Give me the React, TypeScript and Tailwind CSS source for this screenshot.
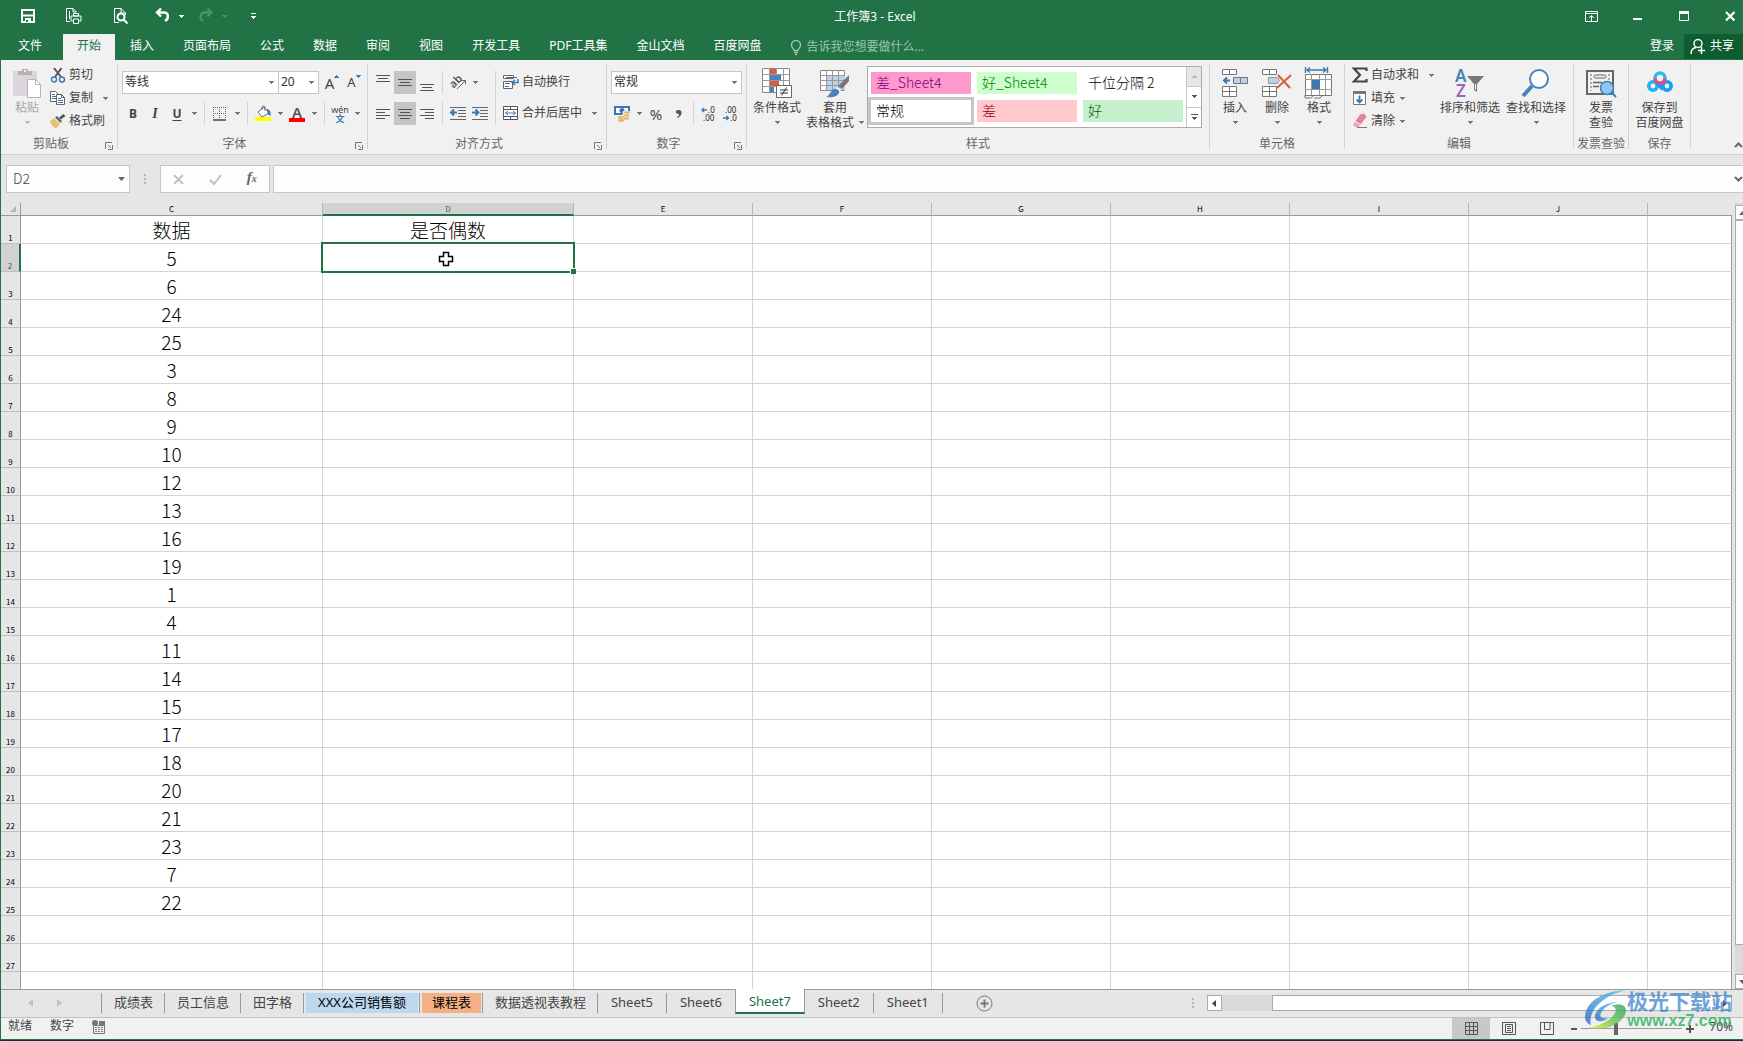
import type { ReactNode } from "react";

/**
 * 电子表格窗口：标题栏、功能区、编辑栏、单元格区域、工作表标签和状态栏
 */

interface ColumnDef {
	name: string;
	width?: number; // 未指定时占满剩余宽度
}

interface SheetTab {
	name: string;
	look?: string;
	active?: boolean;
}

const MENU_TABS = [
	"插入",
	"页面布局",
	"公式",
	"数据",
	"审阅",
	"视图",
	"开发工具",
	"PDF工具集",
	"金山文档",
	"百度网盘",
];

const COLUMNS: ColumnDef[] = [
	{ name: "C", width: 302 },
	{ name: "D", width: 251 },
	{ name: "E", width: 179 },
	{ name: "F", width: 179 },
	{ name: "G", width: 179 },
	{ name: "H", width: 179 },
	{ name: "I", width: 179 },
	{ name: "J", width: 179 },
	{ name: "" },
];

const VALUES = [
	5, 6, 24, 25, 3, 8, 9, 10, 12, 13, 16, 19, 1, 4, 11, 14, 15, 17, 18, 20, 21,
	23, 7, 22,
];

const ROWS = Array.from({ length: 28 }, (_, i) => i + 1);

const SHEETS: SheetTab[] = [
	{ name: "成绩表" },
	{ name: "员工信息" },
	{ name: "田字格" },
	{ name: "XXX公司销售额", look: "bg-[#bdd7ee] px-3" },
	{ name: "课程表", look: "bg-[#f4b084] px-[10px]" },
	{ name: "数据透视表教程" },
	{ name: "Sheet5" },
	{ name: "Sheet6" },
	{ name: "Sheet7", active: true },
	{ name: "Sheet2" },
	{ name: "Sheet1" },
];

const STYLES = [
	{ name: "差_Sheet4", look: "bg-[#ff99cc] text-[#800080]" },
	{ name: "好_Sheet4", look: "bg-[#ccffcc] text-[#008000]" },
	{ name: "千位分隔 2", look: "bg-white text-black" },
	{
		name: "常规",
		look: "bg-white text-black outline-3 outline-[#c6c6c6]",
	},
	{ name: "差", look: "bg-[#ffc7ce] text-[#9c0006]" },
	{ name: "好", look: "bg-[#c6efce] text-[#006100]" },
];

/* ---------- 通用小部件 ---------- */

function Svg({
	w = 16,
	h = 16,
	className = "",
	children,
}: {
	w?: number;
	h?: number;
	className?: string;
	children: ReactNode;
}) {
	return (
		<svg
			width={w}
			height={h}
			viewBox={`0 0 ${w} ${h}`}
			fill="none"
			className={`shrink-0 overflow-visible ${className}`}
			aria-hidden="true"
		>
			{children}
		</svg>
	);
}

function Caret({ className = "text-[#777]" }: { className?: string }) {
	return (
		<Svg w={5} h={3} className={className}>
			<path
				d="M0 0h5v1H0zM1 1h3v1H1zM2 2h1v1H2z"
				fill="currentColor"
				shapeRendering="crispEdges"
			/>
		</Svg>
	);
}

function CaretButton({ label }: { label: string }) {
	return (
		<button
			type="button"
			aria-label={label}
			className="flex h-full w-3 items-center justify-center"
		>
			<Caret />
		</button>
	);
}

function Tool({
	label,
	on = false,
	children,
}: {
	label: string;
	on?: boolean;
	children: ReactNode;
}) {
	return (
		<button
			type="button"
			aria-label={label}
			aria-pressed={on}
			className={`flex h-full w-[22px] items-center justify-center ${on ? "bg-[#c5c5c5]" : ""}`}
		>
			{children}
		</button>
	);
}

function Sep() {
	return <span className="mx-1 h-full w-px bg-[#d2d2d2]" />;
}

function Row({ children }: { children: ReactNode }) {
	return <div className="flex h-[23px] items-center">{children}</div>;
}

function Combo({ label, value }: { label: string; value: string }) {
	return (
		<label className="relative flex h-full w-full items-center border border-[#c6c6c6] bg-white">
			<select
				aria-label={label}
				className="h-full w-full appearance-none bg-transparent pb-0.5 pl-0.5 text-xs leading-5 text-[#333] outline-none"
			>
				<option>{value}</option>
			</select>
			<span className="pointer-events-none absolute right-1">
				<Caret />
			</span>
		</label>
	);
}

function Group({
	title,
	width,
	launcher = false,
	children,
}: {
	title: string;
	width: string;
	launcher?: boolean;
	children: ReactNode;
}) {
	return (
		<section
			aria-label={title}
			className={`flex shrink-0 flex-col border-r border-[#d2d2d2] ${width}`}
		>
			<div className="flex h-[75px]">{children}</div>
			<div className="flex h-[10px] items-center">
				<span className="flex-1 text-center whitespace-nowrap text-[#666]">
					{title}
				</span>
				{launcher && (
					<button
						type="button"
						aria-label={`${title}设置`}
						className="flex w-4 justify-center pt-1"
					>
						<Svg w={8} h={8}>
							<path d="M.5 7V.5H7" stroke="#777" />
							<path d="M3 3l3 3M7.500 3v4.500H3" stroke="#777" />
						</Svg>
					</button>
				)}
			</div>
		</section>
	);
}

function LargeButton({
	icon,
	lines,
	width,
	caret,
	muted = false,
}: {
	icon: ReactNode;
	lines: string[];
	width: string;
	caret?: "below" | "side";
	muted?: boolean;
}) {
	return (
		<button
			type="button"
			className={`flex shrink-0 flex-col items-center pt-1 leading-[15px] whitespace-nowrap ${width} ${muted ? "text-[#a6a6a6]" : "text-[#444]"}`}
		>
			<span className="mb-0.5 flex h-[30px] items-center">{icon}</span>
			{lines.map((line, i) => (
				<span key={line} className="flex items-center gap-[5px]">
					{line}
					{caret === "side" && i === lines.length - 1 && <Caret />}
				</span>
			))}
			{caret === "below" && (
				<span className="flex h-[15px] items-center">
					<Caret className={muted ? "text-[#bbb]" : "text-[#777]"} />
				</span>
			)}
		</button>
	);
}

function SmallButton({
	icon,
	text,
	caret,
}: {
	icon: ReactNode;
	text: string;
	caret?: "near" | "far";
}) {
	return (
		<button
			type="button"
			className="flex h-[23px] items-center gap-[3px] pb-px whitespace-nowrap text-[#444]"
		>
			{icon}
			<span className="pb-px">{text}</span>
			{caret && (
				<span className={caret === "far" ? "ml-[7px]" : "ml-0.5"}>
					<Caret />
				</span>
			)}
		</button>
	);
}

/* ---------- 图标 ---------- */

function Lines({ spans }: { spans: [number, number, number][] }) {
	return (
		<Svg>
			{spans.map(([x, y, w]) => (
				<rect key={y} x={x} y={y} width={w} height={1} fill="#555" />
			))}
		</Svg>
	);
}

function IndentIcon({ right = false }: { right?: boolean }) {
	return (
		<Svg>
			<path
				d="M0 1.500h16M8 4.500h8M8 7.500h8M8 10.500h8M0 13.500h16"
				stroke="#666"
			/>
			{right ? (
				<path d="M0 6.500h6M3.500 3.500l3 3-3 3" stroke="#3e78b3" strokeWidth="2" />
			) : (
				<path d="M7 6.500H1M4 3.500l-3 3 3 3" stroke="#3e78b3" strokeWidth="2" />
			)}
		</Svg>
	);
}

function PasteIcon() {
	return (
		<Svg w={28} h={30}>
			<path d="M0 3h24v25H0z" fill="#dcd6dc" />
			<path d="M5 7V3h4V1h6v2h4v4z" fill="#b5b0b5" />
			<rect x="11" y="2" width="2" height="2" fill="#f1f1f1" />
			<path d="M14.500 11.500h8l5 5v13h-13z" fill="#fff" stroke="#b9b2bb" />
			<path d="M22.500 11.500v5h5" stroke="#b9b2bb" />
		</Svg>
	);
}

function CutIcon() {
	return (
		<Svg>
			<path d="M4 1l7 9M11.500 1L5 10" stroke="#555" strokeWidth="2" />
			<circle cx="4" cy="12.500" r="2.500" stroke="#3e78b3" strokeWidth="1.400" />
			<circle cx="12" cy="12.500" r="2.500" stroke="#3e78b3" strokeWidth="1.400" />
		</Svg>
	);
}

function CopyIcon() {
	return (
		<Svg>
			<path d="M.5 1.500h5l3 3v7h-8z" fill="#fff" stroke="#666" />
			<path d="M2 4.500h3M2 6.500h4M2 8.500h4" stroke="#3e78b3" />
			<path d="M6.500 4.500h5l3 3v7h-8z" fill="#fff" stroke="#666" />
			<path d="M11.500 4.500v3h3" stroke="#666" />
			<path d="M8 8.500h3M8 10.500h5M8 12.500h5" stroke="#3e78b3" />
		</Svg>
	);
}

function BrushIcon() {
	return (
		<Svg>
			<path d="M0 8l4-3 6 6-4 4.500c-3-1-5-4-6-7.500z" fill="#e9bf78" />
			<path d="M5 4.500l2-1.500 5 5-1.500 2z" fill="#666" />
			<path d="M9 4.500L13.500 1l2 2L11 6.500z" fill="#555" />
		</Svg>
	);
}

function BordersIcon() {
	return (
		<Svg w={14} h={14}>
			<path
				d="M0 .5h13M0 6.500h13M.5 0v12M6.500 0v12M12.500 0v12"
				stroke="#666"
				strokeDasharray="1 1"
			/>
			<path d="M0 13h13" stroke="#444" strokeWidth="1.500" />
		</Svg>
	);
}

function FillIcon() {
	return (
		<Svg w={17} h={17}>
			<path d="M3 7l6-5 5 6-7 4z" fill="#fff" stroke="#666" />
			<path d="M7 5V2.500C7 .5 10 .5 10 2.500V6" stroke="#666" />
			<path d="M12 4c3 .5 4 3 3.500 7l-3-2z" fill="#3e78b3" />
			<rect x="0" y="12" width="16" height="4" fill="#ff0" />
		</Svg>
	);
}

function OrientationIcon() {
	return (
		<Svg w={17} h={17}>
			<text
				x="0"
				y="12"
				transform="rotate(-45 5 9)"
				fontSize="11"
				fontFamily="Noto Sans"
				fill="#555"
				fontWeight="600"
			>
				ab
			</text>
			<path d="M7 15l8-8M11.500 6.500h4v4" stroke="#666" />
		</Svg>
	);
}

function WrapIcon() {
	return (
		<Svg>
			<path d="M.5 1.500h10v3H.5zM.5 7.500h9v7H.5z" fill="#fff" stroke="#666" />
			<path d="M3 3.500h11M2 9.500h5M2 12.500h4" stroke="#3e78b3" />
			<path
				d="M15 5v3.500H9.500M12 6l-3 2.500 3 2.500"
				stroke="#3e78b3"
				strokeWidth="1.500"
			/>
		</Svg>
	);
}

function MergeIcon() {
	return (
		<Svg>
			<path d="M.5 1.500h14v13H.5z" fill="#fff" stroke="#555" />
			<path d="M.5 4.500h14M.5 11.500h14M7.500 1v3M7.500 12v3" stroke="#555" />
			<path d="M2.500 8h10M5 6L2.500 8 5 10M10 6l2.500 2L10 10" stroke="#3e78b3" />
		</Svg>
	);
}

function CurrencyIcon() {
	return (
		<Svg w={17} h={17}>
			<path d="M0 1h16v9H0z" fill="#3e78b3" />
			<path d="M2 3h12v5H2z" fill="#fff" />
			<circle cx="8" cy="5.500" r="2.500" fill="#3e78b3" />
			<path d="M9 6h8v8H8z" fill="#f1f1f1" />
			<ellipse cx="13" cy="7.500" rx="3" ry="1.200" fill="#e6b871" />
			<ellipse cx="12.500" cy="10.500" rx="3" ry="1.200" fill="#e6b871" />
			<ellipse cx="12.500" cy="13.500" rx="3" ry="1.200" fill="#e6b871" />
			<ellipse cx="7" cy="12.500" rx="3.200" ry="1.400" fill="#e6b871" />
			<ellipse cx="7" cy="15.500" rx="3.200" ry="1.400" fill="#e6b871" />
		</Svg>
	);
}

function DecimalIcon({ more = false }: { more?: boolean }) {
	return (
		<Svg w={16} h={16}>
			<text x={more ? 7 : 2} y="7" fontSize="8" fontFamily="Noto Sans" fill="#222">
				{more ? ".0" : ".00"}
			</text>
			<text x={more ? 2 : 7} y="15" fontSize="8" fontFamily="Noto Sans" fill="#222">
				{more ? ".00" : ".0"}
			</text>
			{more ? (
				<path d="M6 4H1M3 2L1 4l2 2" stroke="#3e78b3" strokeWidth="1.400" />
			) : (
				<path d="M0 12h6M3.500 10l2 2-2 2" stroke="#3e78b3" strokeWidth="1.400" />
			)}
		</Svg>
	);
}

function ConditionalIcon() {
	return (
		<Svg w={30} h={30}>
			<path d="M.5.500h27v24H.5z" fill="#fff" stroke="#888" />
			<path d="M8 1h6v5H8zM8 13h9v5H8z" fill="#d9603f" />
			<path d="M8 7h11v5H8zM8 19h4v5H8z" fill="#4a82bd" />
			<path
				d="M7.500 0v24M14.500 0v6M21.500 0v24M0 6.500h28M0 12.500h28M0 18.500h28"
				stroke="#999"
			/>
			<path d="M14.500 17.500h15v12h-15z" fill="#fff" stroke="#666" />
			<path d="M18 22h8M18 25h8M24.500 19.500l-5 8" stroke="#333" />
		</Svg>
	);
}

function TableFormatIcon() {
	return (
		<Svg w={30} h={30}>
			<path d="M.5 2.500h24v20H.5z" fill="#fff" stroke="#888" />
			<path d="M7 8h18v14H7z" fill="#bcd0e6" />
			<path
				d="M6.500 2v20M12.500 2v20M18.500 2v20M0 7.500h24M0 12.500h24M0 17.500h24"
				stroke="#999"
			/>
			<path d="M29 7v6L22 21l-4-3z" fill="#777" />
			<path d="M17 19l4 3-1 2-4-3z" fill="#fff" />
			<path d="M6 29c4-1 4-7 9-8 3 0 5 2 4 4-2 4-8 5-13 4z" fill="#4a82bd" />
		</Svg>
	);
}

function InsertIcon() {
	return (
		<Svg w={26} h={30}>
			<path
				d="M.5 1.500h14v5H.5zM7.500 1v5M.5 18.500h14v10H.5zM7.500 18v10M0 23.500h15"
				fill="#fff"
				stroke="#777"
			/>
			<path d="M11.500 9.500h14v6h-14zM18.500 9v6" fill="#bcd0e6" stroke="#777" />
			<path d="M8 12.500H2M5 9.500l-3 3 3 3" stroke="#3e78b3" strokeWidth="2" />
		</Svg>
	);
}

function DeleteIcon() {
	return (
		<Svg w={30} h={30}>
			<path
				d="M.5 1.500h14v5H.5zM7.500 1v5M.5 18.500h14v10H.5zM7.500 18v10M0 23.500h15"
				fill="#fff"
				stroke="#777"
			/>
			<path d="M6.500 9.500h9l2 3-2 3h-9z" fill="#bcd0e6" stroke="#999" />
			<path d="M16 7l12 13M29 7L15 20" stroke="#d9603f" strokeWidth="2" />
		</Svg>
	);
}

function FormatIcon() {
	return (
		<Svg w={30} h={32}>
			<path
				d="M1.500 0v6M23.500 0v6M3 3h19M6 .5L3 3l3 2.500M19 .5L22 3l-3 2.500"
				stroke="#3e78b3"
				strokeWidth="1.400"
			/>
			<path d="M1.500 7.500h26v21h-26z" fill="#fff" stroke="#777" />
			<path
				d="M7.500 7v21M15.500 7v21M21.500 7v21M1 12.500h27M1 22.500h27"
				stroke="#999"
			/>
			<path d="M8 13h8v9H8z" fill="#3e78b3" />
			<path d="M1 28v3h6l3-3M10 31h6l3-3" stroke="#777" />
		</Svg>
	);
}

function SortIcon() {
	return (
		<Svg w={30} h={30}>
			<text
				x="0"
				y="14"
				fontSize="17"
				fontWeight="600"
				fontFamily="Noto Sans"
				fill="#4a82bd"
			>
				A
			</text>
			<text
				x="1"
				y="29"
				fontSize="17"
				fontWeight="600"
				fontFamily="Noto Sans"
				fill="#9a62b8"
			>
				Z
			</text>
			<path d="M12 8h17l-7 8v8l-3-2v-6z" fill="#777" />
			<path d="M20.500 16v5.500" stroke="#fff" />
		</Svg>
	);
}

function FindIcon() {
	return (
		<Svg w={28} h={30}>
			<path d="M10 18L1 28" stroke="#4a82bd" strokeWidth="4" />
			<circle cx="17" cy="11" r="9" fill="#fff" stroke="#4a82bd" strokeWidth="2" />
		</Svg>
	);
}

function InvoiceIcon() {
	return (
		<Svg w={30} h={30}>
			<path d="M1 3h26v23H1z" stroke="#666" strokeWidth="2" />
			<path d="M5 6v17M23 6v8" stroke="#666" strokeDasharray="2 2" />
			<rect x="8" y="7" width="12" height="3" rx="1.500" stroke="#666" />
			<path d="M7 14.500h9M7 18.500h6" stroke="#666" strokeWidth="1.500" />
			<circle cx="21" cy="20" r="6.500" fill="#92c4f2" stroke="#3d82b8" strokeWidth="1.500" />
			<path d="M26 25l4 4" stroke="#3d82b8" strokeWidth="2" />
		</Svg>
	);
}

function NetdiskIcon() {
	return (
		<Svg w={26} h={30}>
			<circle cx="13" cy="10" r="5" stroke="#35b8ef" strokeWidth="3.600" />
			<circle cx="6" cy="18" r="4.200" stroke="#22b2f3" strokeWidth="3.600" />
			<circle cx="20" cy="18" r="4.200" stroke="#1b9df4" strokeWidth="3.600" />
			<path
				d="M8 10.500a5 5 0 0 0 10 0"
				stroke="#ef4a6e"
				strokeWidth="3.600"
			/>
			<path d="M10.500 16l5 5.500" stroke="#1b9df4" strokeWidth="3" />
		</Svg>
	);
}

function SumIcon() {
	return (
		<Svg>
			<path
				d="M14.500 4V1.500H2L8 8l-6 6.500h12.500V12"
				stroke="#444"
				strokeWidth="2.200"
			/>
		</Svg>
	);
}

function FillDownIcon() {
	return (
		<Svg>
			<path d="M1.500 1.500h12v13h-12z" fill="#fff" stroke="#777" />
			<path d="M1 1h13v3H1z" fill="#777" />
			<path d="M7.500 5.500V12M4.500 9.500l3 3 3-3" stroke="#3e78b3" strokeWidth="1.800" />
		</Svg>
	);
}

function EraserIcon() {
	return (
		<Svg>
			<path d="M8 1.500l4-1L14.500 4 8.500 11.500 3.500 8z" fill="#e8829a" />
			<path d="M3 9l5 3-1.500 2H3.500L1 12z" fill="#eda4b3" />
			<path d="M5 14.500h10" stroke="#777" />
		</Svg>
	);
}

/* ---------- 标题栏与菜单 ---------- */

function TitleBar() {
	return (
		<div className="grid h-[34px] grid-cols-[1fr_auto_1fr] items-center text-white">
			<div className="flex items-center pb-0.5 pl-5">
				<button type="button" aria-label="保存">
					<Svg>
						<path d="M1 2h12v12H1z" stroke="#fff" strokeWidth="2" />
						<path d="M2 7.500h10" stroke="#fff" strokeWidth="2" />
						<path d="M4 10h6v4H4z" fill="#fff" />
						<path d="M5 12h2v2H5z" fill="#217346" />
					</Svg>
				</button>
				<button type="button" aria-label="快速打印" className="ml-7">
					<Svg w={18}>
						<path
							d="M5 13.500H1.500v-13H8l3.500 3.500M8 .500V4h3M4.500 3v8"
							stroke="#fff"
						/>
						<path d="M8.500 5.500h5V8h-5zM6 8h10v5H6z" stroke="#fff" />
						<path d="M8.500 11h5v4.500h-5z" fill="#217346" stroke="#fff" />
					</Svg>
				</button>
				<button type="button" aria-label="打印预览" className="ml-[30px]">
					<Svg>
						<path d="M6 14.500H1.500V.500H8L12.500 5v2M8 .500V5h4" stroke="#fff" />
						<circle cx="8" cy="9" r="3.500" stroke="#fff" strokeWidth="2" />
						<path d="M10.500 11.500l4 4" stroke="#fff" strokeWidth="2" />
					</Svg>
				</button>
				<button type="button" aria-label="撤消" className="ml-[26px]">
					<Svg>
						<path
							d="M2 4.500h7c5 0 5 6.500 1 8.500M6 .500l-4 4 4 4"
							stroke="#fff"
							strokeWidth="2.400"
						/>
					</Svg>
				</button>
				<button type="button" aria-label="撤消选项" className="ml-2">
					<Caret className="text-white" />
				</button>
				<button type="button" aria-label="恢复" className="ml-[14px]">
					<Svg>
						<path
							d="M13 4.500H7c-5 0-6 6-2 8.500M9.500 .500l4 4-4 4"
							stroke="#4d9068"
							strokeWidth="2.400"
						/>
					</Svg>
				</button>
				<button type="button" aria-label="恢复选项" className="ml-2">
					<Caret className="text-[#4d9068]" />
				</button>
				<button type="button" aria-label="自定义快速访问工具栏" className="ml-6">
					<Svg w={5} h={6}>
						<path
							d="M0 0h5v1H0zM0 3h5v1H0zM1 4h3v1H1zM2 5h1v1H2z"
							fill="#fff"
							shapeRendering="crispEdges"
						/>
					</Svg>
				</button>
			</div>
			<h1 className="pl-1.5 text-xs">工作簿3 - Excel</h1>
			<div className="flex items-center justify-end gap-[35px] pr-[7px] pb-0.5">
				<button type="button" aria-label="功能区显示选项">
					<Svg w={13} h={11}>
						<path d="M.5.500h12v10H.5zM0 2.500h13M6.500 10V5M4 7l2.500-2.500L9 7" stroke="#fff" />
					</Svg>
				</button>
				<button type="button" aria-label="最小化">
					<Svg w={10} h={10}>
						<path d="M0 7h9v2H0z" fill="#fff" />
					</Svg>
				</button>
				<button type="button" aria-label="最大化">
					<Svg w={12} h={10}>
						<path d="M1.500.500h9v9h-9zM1 1.500h10" stroke="#fff" />
						<path d="M1 0h10v3H1z" fill="#fff" />
					</Svg>
				</button>
				<button type="button" aria-label="关闭">
					<Svg w={11} h={10}>
						<path d="M1 1l8.500 8.500M9.500 1L1 9.500" stroke="#fff" strokeWidth="2.200" />
					</Svg>
				</button>
			</div>
		</div>
	);
}

function MenuBar() {
	return (
		<nav className="flex h-[26px] gap-px text-white">
			<button type="button" className="mr-[3px] px-[17px] pb-[3px]">
				文件
			</button>
			<button
				type="button"
				className="bg-[#f1f1f1] px-[14px] pb-[3px] text-[#217346]"
			>
				开始
			</button>
			{MENU_TABS.map((tab) => (
				<button
					key={tab}
					type="button"
					className="px-[14px] pb-[3px] whitespace-nowrap"
				>
					{tab}
				</button>
			))}
			<button
				type="button"
				className="flex items-center gap-1 px-[14px] whitespace-nowrap text-[#9cc5ac]"
			>
				<Svg w={12} h={15}>
					<path
						d="M4 10.500C4 8.500 1.500 8 1.500 5a4.500 4.500 0 0 1 9 0c0 3-2.500 3.500-2.500 5.500zM4 12.500h4M5 14.500h2"
						stroke="currentColor"
						strokeWidth="1.400"
					/>
				</Svg>
				告诉我您想要做什么...
			</button>
			<button type="button" className="ml-auto px-[9px] pb-[3px]">
				登录
			</button>
			<button
				type="button"
				className="mb-px flex items-center gap-1 bg-[#0e5c2f] pr-[9px] pb-px pl-1.5"
			>
				<Svg w={16} h={17}>
					<circle cx="8" cy="5.500" r="4" stroke="#fff" strokeWidth="1.500" />
					<path
						d="M1 16c0-4 2-6 5-6.500M8 12.500h7M11.500 9v7"
						stroke="#fff"
						strokeWidth="1.500"
					/>
				</Svg>
				共享
			</button>
		</nav>
	);
}

/* ---------- 功能区 ---------- */

function Ribbon() {
	return (
		<div className="relative flex h-[95px] overflow-hidden border-b border-[#d2d2d2] bg-[#f1f1f1] pt-1 pb-[5px]">
			<Group title="剪贴板" width="w-[117px]" launcher>
				<div className="ml-2">
					<LargeButton
						icon={<PasteIcon />}
						lines={["粘贴"]}
						width="w-9"
						caret="below"
						muted
					/>
				</div>
				<div className="ml-[5px] flex flex-col">
					<SmallButton icon={<CutIcon />} text="剪切" />
					<SmallButton icon={<CopyIcon />} text="复制" caret="far" />
					<SmallButton icon={<BrushIcon />} text="格式刷" />
				</div>
			</Group>

			<Group title="字体" width="w-[250px]" launcher>
				<div className="flex flex-col gap-2 px-1 pt-[7px]">
					<Row>
						<div className="h-full w-[157px]">
							<Combo label="字体" value="等线" />
						</div>
						<div className="-ml-px h-full w-[41px]">
							<Combo label="字号" value="20" />
						</div>
						<Tool label="增大字号">
							<span className="pl-1 text-[15px] text-[#444]">A</span>
							<span className="-mt-3 rotate-180">
								<Caret className="text-[#3e78b3]" />
							</span>
						</Tool>
						<Tool label="减小字号">
							<span className="pl-1 text-[13px] text-[#444]">A</span>
							<span className="-mt-3">
								<Caret className="text-[#3e78b3]" />
							</span>
						</Tool>
					</Row>
					<Row>
						<Tool label="加粗">
							<span className="text-xs font-bold text-[#444]">B</span>
						</Tool>
						<Tool label="倾斜">
							<span className="font-['Liberation_Serif',serif] text-sm font-bold text-[#444] italic">
								I
							</span>
						</Tool>
						<Tool label="下划线">
							<span className="text-xs font-bold text-[#444] underline underline-offset-2">
								U
							</span>
						</Tool>
						<CaretButton label="下划线样式" />
						<Sep />
						<Tool label="边框">
							<BordersIcon />
						</Tool>
						<CaretButton label="边框样式" />
						<Sep />
						<Tool label="填充颜色">
							<FillIcon />
						</Tool>
						<CaretButton label="选择填充颜色" />
						<Tool label="字体颜色">
							<span className="h-[17px] w-4 border-b-4 border-[#f00] text-center text-[15px] leading-[14px] font-semibold text-[#555]">
								A
							</span>
						</Tool>
						<CaretButton label="选择字体颜色" />
						<Sep />
						<Tool label="显示拼音">
							<span className="flex flex-col items-center leading-[9px]">
								<span className="text-[9px] text-[#444]">wén</span>
								<span className="text-[9px] font-bold text-[#3e78b3]">文</span>
							</span>
						</Tool>
						<CaretButton label="拼音选项" />
					</Row>
				</div>
			</Group>

			<Group title="对齐方式" width="w-[239px]" launcher>
				<div className="flex flex-col gap-2 pt-[7px] pl-1">
					<Row>
						<Tool label="顶端对齐">
							<Lines spans={[[1, 0, 14], [3, 3, 10], [1, 6, 14]]} />
						</Tool>
						<Tool label="垂直居中" on>
							<Lines spans={[[1, 4, 14], [3, 7, 10], [1, 10, 14]]} />
						</Tool>
						<Tool label="底端对齐">
							<Lines spans={[[1, 9, 14], [3, 12, 10], [1, 15, 14]]} />
						</Tool>
						<Sep />
						<Tool label="方向">
							<OrientationIcon />
						</Tool>
						<CaretButton label="方向选项" />
					</Row>
					<Row>
						<Tool label="左对齐">
							<Lines spans={[[1, 3, 14], [1, 6, 9], [1, 9, 14], [1, 12, 9]]} />
						</Tool>
						<Tool label="居中" on>
							<Lines spans={[[1, 3, 14], [3, 6, 10], [1, 9, 14], [3, 12, 10]]} />
						</Tool>
						<Tool label="右对齐">
							<Lines spans={[[1, 3, 14], [6, 6, 9], [1, 9, 14], [6, 12, 9]]} />
						</Tool>
						<Sep />
						<Tool label="减少缩进量">
							<IndentIcon />
						</Tool>
						<Tool label="增加缩进量">
							<IndentIcon right />
						</Tool>
					</Row>
				</div>
				<span className="mt-[7px] ml-1 h-[54px] w-px bg-[#d2d2d2]" />
				<div className="flex flex-col gap-2 pt-[7px] pl-[7px]">
					<SmallButton icon={<WrapIcon />} text="自动换行" />
					<SmallButton icon={<MergeIcon />} text="合并后居中" caret="far" />
				</div>
			</Group>

			<Group title="数字" width="w-[140px]" launcher>
				<div className="flex flex-1 flex-col gap-2 px-1 pt-[7px]">
					<Row>
						<Combo label="数字格式" value="常规" />
					</Row>
					<Row>
						<Tool label="会计数字格式">
							<CurrencyIcon />
						</Tool>
						<CaretButton label="会计格式选项" />
						<Tool label="百分比样式">
							<span className="text-[15px] text-[#444]">%</span>
						</Tool>
						<Tool label="千位分隔样式">
							<Svg w={7} h={10}>
								<path
									d="M3 1c5-1 5 6-1 8v-1c2-1 2-2 2-3C0 5 0 1 3 1z"
									fill="#555"
								/>
							</Svg>
						</Tool>
						<Sep />
						<Tool label="增加小数位数">
							<DecimalIcon more />
						</Tool>
						<Tool label="减少小数位数">
							<DecimalIcon />
						</Tool>
					</Row>
				</div>
			</Group>

			<Group title="样式" width="w-[463px]">
				<div className="flex gap-[5px] pl-1.5">
					<LargeButton
						icon={<ConditionalIcon />}
						lines={["条件格式"]}
						width="w-12"
						caret="below"
					/>
					<LargeButton
						icon={<TableFormatIcon />}
						lines={["套用", "表格格式"]}
						width="w-[58px]"
						caret="side"
					/>
				</div>
				<div className="mt-0.5 ml-[3px] flex h-[62px] border border-[#ababab] bg-white">
					<div className="grid grid-cols-3 content-center gap-x-1.5 gap-y-1.5 px-[3px]">
						{STYLES.map((style) => (
							<button
								key={style.name}
								type="button"
								className={`h-[22px] w-[100px] pb-0.5 pl-[5px] text-left font-['Noto_Sans_CJK_SC',sans-serif] text-sm leading-5 font-light whitespace-nowrap ${style.look}`}
							>
								{style.name}
							</button>
						))}
					</div>
					<div className="flex w-[15px] flex-col divide-y divide-[#c6c6c6] border-l border-[#c6c6c6]">
						<button
							type="button"
							aria-label="上一行样式"
							className="flex flex-1 items-center justify-center bg-[#e6e6e6]"
						>
							<span className="rotate-180">
								<Caret className="text-[#b5b5b5]" />
							</span>
						</button>
						<button
							type="button"
							aria-label="下一行样式"
							className="flex flex-1 items-center justify-center"
						>
							<Caret className="text-[#555]" />
						</button>
						<button
							type="button"
							aria-label="其他样式"
							className="flex flex-1 flex-col items-center justify-center gap-0.5"
						>
							<span className="h-px w-[7px] bg-[#555]" />
							<Caret className="text-[#555]" />
						</button>
					</div>
				</div>
			</Group>

			<Group title="单元格" width="w-[135px]">
				<div className="flex px-1">
					<LargeButton
						icon={<InsertIcon />}
						lines={["插入"]}
						width="w-[42px]"
						caret="below"
					/>
					<LargeButton
						icon={<DeleteIcon />}
						lines={["删除"]}
						width="w-[42px]"
						caret="below"
					/>
					<LargeButton
						icon={<FormatIcon />}
						lines={["格式"]}
						width="w-[42px]"
						caret="below"
					/>
				</div>
			</Group>

			<Group title="编辑" width="w-[229px]">
				<div className="flex w-[95px] flex-col pl-[7px]">
					<SmallButton icon={<SumIcon />} text="自动求和" caret="far" />
					<SmallButton icon={<FillDownIcon />} text="填充" caret="near" />
					<SmallButton icon={<EraserIcon />} text="清除" caret="near" />
				</div>
				<div className="flex gap-1.5">
					<LargeButton
						icon={<SortIcon />}
						lines={["排序和筛选"]}
						width="w-[60px]"
						caret="below"
					/>
					<LargeButton
						icon={<FindIcon />}
						lines={["查找和选择"]}
						width="w-[60px]"
						caret="below"
					/>
				</div>
			</Group>

			<Group title="发票查验" width="w-[55px]">
				<LargeButton
					icon={<InvoiceIcon />}
					lines={["发票", "查验"]}
					width="w-[54px]"
				/>
			</Group>

			<Group title="保存" width="w-[62px]">
				<LargeButton
					icon={<NetdiskIcon />}
					lines={["保存到", "百度网盘"]}
					width="w-[61px]"
				/>
			</Group>

			<button
				type="button"
				aria-label="折叠功能区"
				className="ml-auto self-end"
			>
				<Svg w={9} h={8}>
					<path d="M1 6l3.500-3.500L8 6" stroke="#666" strokeWidth="2" />
				</Svg>
			</button>
		</div>
	);
}

/* ---------- 编辑栏 ---------- */

function FormulaBar() {
	return (
		<div className="flex py-[10px] pl-[5px]">
			<label className="flex h-7 w-[124px] items-center border border-[#c6c6c6] bg-[#fdfdfd] pr-1">
				<input
					aria-label="名称框"
					defaultValue="D2"
					className="w-full min-w-0 bg-transparent pb-0.5 pl-1.5 font-['Noto_Sans_CJK_SC',sans-serif] text-sm font-light text-[#444] outline-none"
				/>
				<Svg w={7} h={4}>
					<path d="M0 0h7L3.500 4z" fill="#666" />
				</Svg>
			</label>
			<span className="flex w-[30px] items-center justify-center">
				<Svg w={2} h={10}>
					<path d="M0 0h2v2H0zM0 4h2v2H0zM0 8h2v2H0z" fill="#b5b5b5" />
				</Svg>
			</span>
			<div className="flex h-7 w-[110px] items-center justify-around border border-[#c6c6c6] bg-[#fdfdfd]">
				<button type="button" aria-label="取消">
					<Svg w={11} h={11}>
						<path d="M1 1l9 9M10 1l-9 9" stroke="#c0c0c0" strokeWidth="1.800" />
					</Svg>
				</button>
				<button type="button" aria-label="输入">
					<Svg w={13} h={11}>
						<path d="M1 6l4 4 7-9" stroke="#c0c0c0" strokeWidth="2" />
					</Svg>
				</button>
				<button
					type="button"
					aria-label="插入函数"
					className="pb-0.5 font-['Liberation_Serif',serif] text-[15px] font-bold text-[#666] italic"
				>
					f<span className="text-[10px]">x</span>
				</button>
			</div>
			<label className="ml-[3px] flex h-7 flex-1 items-center border-y border-l border-[#c6c6c6] bg-[#fdfdfd]">
				<input
					aria-label="编辑栏"
					className="h-full w-full bg-transparent px-1 text-sm outline-none"
				/>
				<Svg w={9} h={8}>
					<path d="M1 2l3.500 3.500L8 2" stroke="#666" strokeWidth="2" />
				</Svg>
			</label>
		</div>
	);
}

/* ---------- 单元格区域 ---------- */

function cellText(column: string, row: number) {
	if (column === "C") return row === 1 ? "数据" : (VALUES[row - 2] ?? "");
	if (column === "D" && row === 1) return "是否偶数";
	return "";
}

function Grid() {
	return (
		<div className="flex min-h-0 flex-1">
			<div className="mr-[3px] min-w-0 flex-1 overflow-hidden">
				<table className="w-full table-fixed border-separate border-spacing-0 font-['Noto_Sans_CJK_SC',sans-serif]">
					<colgroup>
						<col style={{ width: 20 }} />
						{COLUMNS.map((c) => (
							<col key={c.name} style={{ width: c.width }} />
						))}
					</colgroup>
					<thead>
						<tr className="h-[13px]">
							<th className="border-r border-b border-[#999] p-0">
								<Svg w={6} h={6} className="mr-1 ml-auto">
									<path d="M6 0v6H0z" fill="#b5b5b5" />
								</Svg>
							</th>
							{COLUMNS.map((c) => (
								<th
									key={c.name}
									scope="col"
									className={
										c.name === "D"
											? "border-r border-b-2 border-r-[#b5b5b5] border-b-[#217346] bg-[#d2d2d2] p-0 text-[8px] leading-[11px] font-normal text-[#217346]"
											: c.name === ""
												? "border-b border-[#999] p-0"
												: "border-r border-b border-r-[#b5b5b5] border-b-[#999] p-0 text-[8px] leading-[12px] font-normal text-black"
									}
								>
									{c.name}
								</th>
							))}
						</tr>
					</thead>
					<tbody>
						{ROWS.map((row) => (
							<tr key={row} className="h-7">
								<th
									scope="row"
									className={
										row === 2
											? "border-r-2 border-b border-r-[#217346] border-b-[#c0c0c0] bg-[#d2d2d2] p-0 align-bottom text-[8px] leading-[11px] font-normal text-[#217346]"
											: "border-r border-b border-r-[#999] border-b-[#c0c0c0] p-0 align-bottom text-[8px] leading-[11px] font-normal text-black"
									}
								>
									{row}
								</th>
								{COLUMNS.map((c) => (
									<td
										key={c.name}
										className={`relative border-r border-b border-b-[#d4d4d4] bg-white p-0 text-center text-[19px] leading-[26px] font-light text-black ${c.name === "" ? "border-r-[#999]" : "border-r-[#d4d4d4]"}`}
									>
										{cellText(c.name, row)}
										{c.name === "D" && row === 2 && <Selection />}
									</td>
								))}
							</tr>
						))}
					</tbody>
				</table>
			</div>
			<VerticalScroll />
		</div>
	);
}

function Selection() {
	return (
		<span className="absolute -top-0.5 -right-0.5 -bottom-0.5 -left-0.5 z-10 flex items-center justify-center border-2 border-[#217346]">
			<Svg w={16} h={16} className="mt-0.5 -ml-1">
				<path
					d="M5.500 1.500h5v4h4v5h-4v4h-5v-4h-4v-5h4z"
					fill="#fff"
					stroke="#000"
					strokeWidth="1.500"
				/>
			</Svg>
			<span className="absolute -right-[3px] -bottom-[3px] size-[6px] border-t border-l border-white bg-[#217346]" />
		</span>
	);
}

function VerticalScroll() {
	return (
		<div className="flex w-2 flex-col overflow-hidden bg-[#dadada] pt-0.5">
			<button
				type="button"
				aria-label="向上滚动"
				className="flex h-[15px] w-[15px] items-center justify-center border border-[#ababab] bg-white"
			>
				<Svg w={7} h={4}>
					<path d="M3.500 0L7 4H0z" fill="#666" />
				</Svg>
			</button>
			<div className="w-[15px] flex-[725] border border-[#ababab] bg-white" />
			<div className="flex-[29]" />
			<button
				type="button"
				aria-label="向下滚动"
				className="flex h-[15px] w-[15px] items-center justify-center border border-[#ababab] bg-white"
			>
				<Svg w={7} h={4}>
					<path d="M0 0h7L3.500 4z" fill="#666" />
				</Svg>
			</button>
		</div>
	);
}

/* ---------- 工作表标签与状态栏 ---------- */

function tabPadding(sheet: SheetTab) {
	if (sheet.look) return `text-black ${sheet.look}`;
	return sheet.name.startsWith("Sheet") ? "px-[13px]" : "pr-[11px] pl-3";
}

function SheetBar() {
	return (
		<div className="flex h-[29px] border-t border-b border-t-[#999] border-b-[#c0c0c0] pt-[3px] text-[13px] leading-4 text-[#444]">
			<div className="flex h-5 w-[101px] items-center gap-6 border-r border-[#999] pl-[27px]">
				<button type="button" aria-label="前一个工作表">
					<Svg w={5} h={8}>
						<path d="M5 0v8L0 4z" fill="#c0c0c0" />
					</Svg>
				</button>
				<button type="button" aria-label="后一个工作表">
					<Svg w={5} h={8}>
						<path d="M0 0v8l5-4z" fill="#c0c0c0" />
					</Svg>
				</button>
			</div>
			{SHEETS.map((sheet) =>
				sheet.active ? (
					<button
						key={sheet.name}
						type="button"
						className="relative -mt-1 -ml-px h-[25px] border-x border-b-2 border-x-[#999] border-b-[#217346] bg-white px-[13px] text-[#217346]"
					>
						{sheet.name}
					</button>
				) : (
					<div
						key={sheet.name}
						className={`flex h-5 border-r border-[#999] ${sheet.look ? "pr-px pl-0.5" : ""}`}
					>
						<button
							type="button"
							className={`pb-[3px] whitespace-nowrap ${tabPadding(sheet)}`}
						>
							{sheet.name}
						</button>
					</div>
				),
			)}
			<button type="button" aria-label="新工作表" className="ml-[33px] h-5">
				<Svg w={17} h={17}>
					<circle cx="8.500" cy="8.500" r="7.500" stroke="#777" />
					<path d="M8.500 4.500v8M4.500 8.500h8" stroke="#777" strokeWidth="2" />
				</Svg>
			</button>

			<div className="mt-0.5 mr-[11px] ml-auto flex h-4 w-[31%] items-center">
				<Svg w={2} h={10} className="mr-[13px]">
					<path d="M0 0h2v2H0zM0 4h2v2H0zM0 8h2v2H0z" fill="#b5b5b5" />
				</Svg>
				<button
					type="button"
					aria-label="向左滚动"
					className="flex h-full w-[15px] items-center justify-center border border-[#ababab] bg-white"
				>
					<Svg w={4} h={7}>
						<path d="M4 0v7L0 3.500z" fill="#444" />
					</Svg>
				</button>
				<span className="h-full w-[50px] bg-[#dadada]" />
				<span className="h-full flex-1 border border-[#ababab] bg-white" />
				<button
					type="button"
					aria-label="向右滚动"
					className="flex h-full w-[15px] items-center justify-center border border-[#ababab] bg-white"
				>
					<Svg w={4} h={7}>
						<path d="M0 0v7l4-3.500z" fill="#444" />
					</Svg>
				</button>
			</div>
		</div>
	);
}

function StatusBar() {
	return (
		<footer className="flex h-[21px] items-center bg-[#f1f1f1] pl-[7px] text-[#444]">
			<span className="pb-1.5">就绪</span>
			<span className="ml-[18px] pb-1.5">数字</span>
			<button type="button" aria-label="录制宏" className="ml-[18px] pb-1">
				<Svg w={14} h={14}>
					<path d="M1.500 5.500h11v8h-11z" stroke="#777" />
					<path d="M7 1h6v4H7z" fill="#777" />
					<circle cx="3" cy="3" r="3" fill="#777" />
					<path
						d="M3 7.500h8M3 9.500h8M3 11.500h8"
						stroke="#777"
						strokeDasharray="2 1"
					/>
				</Svg>
			</button>
			<div className="ml-auto flex h-full items-center pr-[10px]">
				<button
					type="button"
					aria-label="普通视图"
					className="flex h-full w-[38px] items-center justify-center bg-[#c8c8c8]"
				>
					<Svg w={13} h={13}>
						<path
							d="M.5.500h12v12H.5zM4.500 0v13M8.500 0v13M0 4.500h13M0 8.500h13"
							stroke="#555"
						/>
					</Svg>
				</button>
				<button
					type="button"
					aria-label="页面布局视图"
					className="flex h-full w-[38px] items-center justify-center"
				>
					<Svg w={14} h={13}>
						<path
							d="M.5.500h13v12H.5zM3.500 2.500h7v8h-7zM5 4.500h4M5 6.500h4M5 8.500h4"
							stroke="#555"
						/>
					</Svg>
				</button>
				<button
					type="button"
					aria-label="分页预览"
					className="flex h-full w-[38px] items-center justify-center"
				>
					<Svg w={14} h={13}>
						<path d="M.5.500h13v12H.5zM4.500 0v7.500H10V0" stroke="#555" />
					</Svg>
				</button>
				<button type="button" aria-label="缩小" className="ml-[5px]">
					<Svg w={6} h={2}>
						<path d="M0 0h6v2H0z" fill="#555" />
					</Svg>
				</button>
				<input
					type="range"
					aria-label="显示比例"
					min={0}
					max={100}
					defaultValue={34}
					className="mx-1 h-3 w-[101px] appearance-none bg-[linear-gradient(#999,#999)] bg-[length:100%_1px] bg-center bg-no-repeat [&::-webkit-slider-thumb]:h-3 [&::-webkit-slider-thumb]:w-1 [&::-webkit-slider-thumb]:appearance-none [&::-webkit-slider-thumb]:bg-[#666]"
				/>
				<button type="button" aria-label="放大">
					<Svg w={8} h={8}>
						<path d="M3 0h2v8H3zM0 3h8v2H0z" fill="#555" />
					</Svg>
				</button>
				<span className="ml-[15px] pb-1">70%</span>
			</div>
		</footer>
	);
}

function Watermark() {
	return (
		<div className="pointer-events-none absolute right-[11px] bottom-[9px] z-20 flex items-center opacity-75">
			<Svg w={42} h={40}>
				<defs>
					<linearGradient id="swirlBlue" x1="0" y1="1" x2="1" y2="0">
						<stop offset="0" stopColor="#1f62bd" />
						<stop offset="1" stopColor="#4ec4f0" />
					</linearGradient>
					<linearGradient id="swirlGreen" x1="0" y1="1" x2="1" y2="0">
						<stop offset="0" stopColor="#e6e32c" />
						<stop offset="0.500" stopColor="#5fc04c" />
						<stop offset="1" stopColor="#1f9f55" />
					</linearGradient>
				</defs>
				<path
					d="M41 0C22 1 1 9 0 27c0 4 3 7 6 8C3 24 13 7 41 0z"
					fill="url(#swirlBlue)"
				/>
				<path
					d="M33 12C21 12 10 19 10 27c0 5 8 6 13 1-6 1-9-1-7-5 2-5 9-9 17-11z"
					fill="url(#swirlBlue)"
				/>
				<path
					d="M26 16c9 0 7 15-22 22 20 4 37-7 37-18 0-5-7-7-15-4z"
					fill="url(#swirlGreen)"
				/>
			</Svg>
			<div className="flex flex-col items-center font-bold whitespace-nowrap">
				<span className="font-['Noto_Sans_CJK_SC',sans-serif] text-[21px] leading-[22px] text-[#3e86cf]">
					极光下载站
				</span>
				<span className="font-['Liberation_Sans',sans-serif] text-base leading-5 text-[#1fae55]">
					www.xz7.com
				</span>
			</div>
		</div>
	);
}

export default function App() {
	return (
		<div className="relative flex h-screen flex-col overflow-hidden border-b border-l border-b-[#1d2b3f] border-l-[#217346] bg-[#e6e6e6] font-['Noto_Sans','Noto_Sans_CJK_SC',sans-serif] text-xs">
			<header className="bg-[#217346]">
				<TitleBar />
				<MenuBar />
			</header>
			<Ribbon />
			<FormulaBar />
			<Grid />
			<SheetBar />
			<StatusBar />
			<div className="h-px bg-[#217346]" />
			<Watermark />
		</div>
	);
}
